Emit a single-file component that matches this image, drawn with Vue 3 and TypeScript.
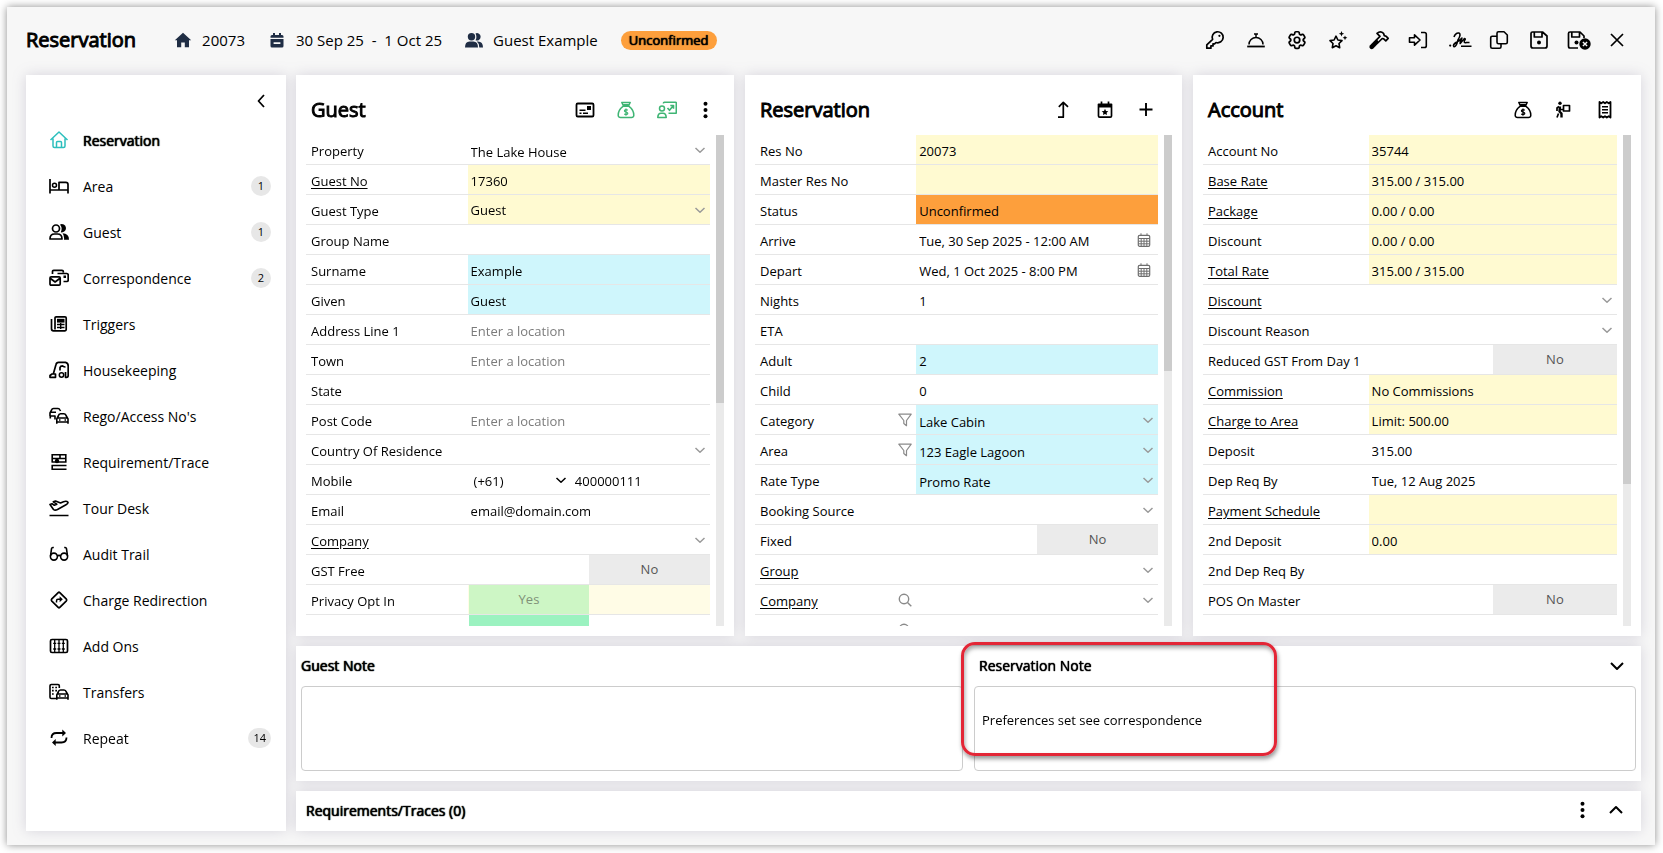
<script setup lang="ts">
import { h, ref } from 'vue'

type Kind = 'text' | 'select' | 'date' | 'toggle' | 'phone'
type Tone = 'yellow' | 'cyan' | 'orange' | 'cream'

interface Field {
  label: string
  value?: string
  kind?: Kind
  tone?: Tone
  link?: boolean
  locked?: boolean
  placeholder?: string
  icon?: string
  on?: boolean
}

interface Panel {
  id: string
  title: string
  tools: { icon: string; label: string; accent?: boolean }[]
  thumb: number
  fields: Field[]
}

const icons: Record<string, [number, number, string]> = {
  house: [18, 16, '<path fill="currentColor" stroke="none" d="M9 .8 17.200 8.200H15V15.200H10.800V10.600H7.200V15.200H3V8.200H.800Z"/>'],
  calendarMinus: [18, 16, '<path transform="translate(2 0)" fill="currentColor" stroke="none" fill-rule="evenodd" d="M3 1H5V3H9V1H11V3H12Q13.5 3 13.5 4.5V5.7H.5V4.5Q.5 3 2 3H3ZM.5 6.9H13.5V14Q13.5 15.5 12 15.5H2Q.5 15.5 .5 14ZM3.6 10.3V12H10.4V10.3Z"/>'],
  usersSolid: [18, 16, '<g fill="currentColor" stroke="none"><circle cx="6.5" cy="4.8" r="3.7"/><path d="M0 15.5Q0 9.5 4.5 9.5H8.5Q13 9.5 13 15.5Z"/><path d="M10.5 1.4A3.7 3.7 0 1 1 10.5 8.2Q12.300 5 10.500 1.400ZM11.800 9.500H13Q18 9.500 18 15.500H14.300Q14.300 11.300 11.800 9.500Z"/></g>'],
  key: [20, 20, '<path stroke-width="1.7" d="M7.600 9.400A5.500 5.500 0 1 1 11 12.500L9.600 13.800H8V15.900H5.900V18.200H1.800V14.800Z"/><circle cx="14.400" cy="5.800" r="1.100" fill="currentColor" stroke="none"/>'],
  bell: [20, 20, '<path d="M3 14.500A7 7 0 0 1 17 14.500M8 4H12M10 4V7"/><path stroke-width="1.800" d="M1.200 16.500H18.800"/>'],
  gear: [20, 20, '<g transform="translate(-1 -1) scale(.917)" stroke-width="1.900"><path d="M9.594 3.940c.090-.542.560-.940 1.110-.940h2.593c.550 0 1.020.398 1.110.940l.213 1.281c.063.374.313.686.645.870.074.040.147.083.220.127.325.196.720.257 1.075.124l1.217-.456a1.125 1.125 0 0 1 1.370.490l1.296 2.247a1.125 1.125 0 0 1-.260 1.431l-1.003.827c-.293.241-.438.613-.430.992a7.723 7.723 0 0 1 0 .255c-.008.378.137.750.430.991l1.004.827c.424.350.534.955.260 1.430l-1.298 2.247a1.125 1.125 0 0 1-1.369.491l-1.217-.456c-.355-.133-.750-.072-1.076.124a6.470 6.470 0 0 1-.220.128c-.331.183-.581.495-.644.869l-.213 1.281c-.090.543-.560.940-1.110.940h-2.594c-.550 0-1.019-.398-1.110-.940l-.213-1.281c-.062-.374-.312-.686-.644-.870a6.520 6.520 0 0 1-.220-.127c-.325-.196-.720-.257-1.076-.124l-1.217.456a1.125 1.125 0 0 1-1.369-.490l-1.297-2.247a1.125 1.125 0 0 1 .260-1.431l1.004-.827c.292-.240.437-.613.430-.991a6.932 6.932 0 0 1 0-.255c.007-.380-.138-.751-.430-.992l-1.004-.827a1.125 1.125 0 0 1-.260-1.430l1.297-2.247a1.125 1.125 0 0 1 1.370-.491l1.216.456c.356.133.751.072 1.076-.124.072-.044.146-.086.220-.128.332-.183.582-.495.644-.869l.214-1.280Z"/><circle cx="12" cy="12" r="3"/></g>'],
  stars: [20, 20, '<path stroke-width="1.600" d="M8 6.200 9.900 10 14 10.600 11 13.500 11.700 17.700 8 15.700 4.300 17.700 5 13.500 2 10.600 6.100 10Z"/><path fill="currentColor" stroke="none" d="M13.500 1 14.300 2.900 16.200 3.700 14.300 4.500 13.500 6.400 12.700 4.500 10.800 3.700 12.700 2.900ZM17 5.400 17.700 7.100 19.400 7.800 17.700 8.500 17 10.200 16.300 8.500 14.600 7.800 16.300 7.100Z"/>'],
  hammer: [20, 20, '<path stroke-width="4.600" stroke-linecap="round" d="M2.700 16.800 7.300 12.200"/><path stroke-width="1.700" d="M6.500 10.800 11 6.300 8 3.300Q11.500 .500 14.500 3.300L15.300 5.600 17 6.200 19.200 8.400 16.800 10.800 14.700 8.800 13.200 8.500 8.700 13"/>'],
  login: [20, 20, '<g transform="translate(-2 0)"><path stroke-width="1.600" d="M1.500 7.800H6.500V4.800L12 10 6.500 15.200V12.200H1.500ZM13 2.500H16.500Q18.300 2.500 18.300 4.300V15.700Q18.300 17.500 16.500 17.500H13"/></g>'],
  sign: [20, 20, '<g transform="translate(-2 0)"><path stroke-width="1.600" d="M5 7Q6.500 2.500 10 3Q12.500 4 9 10Q7 17.500 4.800 16.500Q3.500 15 7 12.500Q11 10.500 13 8Q10.500 13 11.200 13.500Q13 11 15.500 8.500Q17 9 15.500 10.500Q14.500 13.500 17.500 12.500L20.500 12.500M12 16.200H22.500"/><circle cx="1.200" cy="15.600" r="1.100" fill="currentColor" stroke="none"/></g>'],
  copy: [20, 20, '<path stroke-width="1.600" d="M9.500 1.800H15L18.300 5V12.200Q18.300 13.700 16.800 13.700H9.500Q8 13.700 8 12.200V3.300Q8 1.800 9.500 1.800ZM8 6.300H3.200Q1.700 6.300 1.700 7.800V16.700Q1.700 18.200 3.200 18.200H10.500Q12 18.200 12 16.700V13.700"/>'],
  save: [20, 20, '<path stroke-width="1.700" d="M3.500 2H13.500L18 6V16Q18 18 16 18H4Q2 18 2 16V3.500Q2 2 3.500 2ZM5.300 2V7H13V2"/><circle cx="10" cy="12.500" r="2" fill="currentColor" stroke="none"/>'],
  saveClose: [24, 20, '<path stroke-width="1.700" d="M11 18H3Q1.500 18 1.500 16V3.500Q1.500 2 3 2H13L17 6V8M4.800 2V7H12.500V2"/><circle cx="9.500" cy="12.500" r="2" fill="currentColor" stroke="none"/><circle cx="18" cy="14" r="5.700" fill="currentColor" stroke="none"/><path stroke="#f7f7f7" stroke-width="1.400" d="M15.900 11.900 20.100 16.100M20.100 11.900 15.900 16.100"/>'],
  close: [20, 20, '<path stroke-width="1.700" d="M4 4 16 16M16 4 4 16"/>'],
  chevLeft: [10, 16, '<path stroke-width="1.800" d="M8 2 2.500 8 8 14"/>'],
  chevDown: [16, 16, '<path stroke-width="2" d="M2 5 8 11 14 5"/>'],
  chevUp: [16, 16, '<path stroke-width="2" d="M2 11 8 5 14 11"/>'],
  chev: [12, 12, '<path stroke-width="1.500" d="M1.500 4 6 8.200 10.500 4"/>'],
  home: [20, 20, '<path d="M1.500 10 10 2 18.500 10M4 8.500V16Q4 17.500 5.500 17.500H14.500Q16 17.500 16 16V8.500M7.500 17.500V12.500Q7.500 11.500 8.500 11.500H11.500Q12.500 11.500 12.500 12.500V17.500"/>'],
  bed: [20, 20, '<path stroke-width="1.700" d="M1 3V17.500M1 14H19M19 17.500V8.500Q19 6.300 16.800 6.300H10V14"/><circle cx="5.500" cy="9.200" r="2"/>'],
  users: [20, 20, '<circle cx="7" cy="6.500" r="3.500" stroke-width="1.700"/><path stroke-width="1.700" d="M1 17Q1 12 5.500 12H8.500Q13 12 13 17Z"/><path fill="currentColor" stroke="none" d="M11 2.400A4.200 4.200 0 1 1 11.800 10.300Q13.800 6 11 2.400ZM13.500 11.300Q20 11.300 20 17.800H15Q15.500 13.500 13.500 11.300Z"/>'],
  mail: [20, 20, '<path stroke-width="1.700" d="M3.500 6V3.500Q3.500 2.300 4.700 2.300H13Q14.300 2.300 14.300 3.500V4.500M8.500 5.500H17.800Q19.200 5.500 19.200 6.800V12.200Q19.200 13.500 17.800 13.500H14.500M1 10Q1 8.800 2.200 8.800H10Q11.200 8.800 11.200 10V16Q11.200 17.200 10 17.200H2.200Q1 17.200 1 16ZM1.500 10.500 6.100 14 10.700 10.500"/><rect x="14.500" y="7.500" width="2.500" height="2.500" fill="currentColor" stroke="none"/>'],
  fax: [20, 20, '<path stroke-width="1.700" d="M6 4Q6 2.800 7.200 2.800H16Q17.200 2.800 17.200 4V15.500Q17.200 16.800 16 16.800H4.500Q2.500 16.800 2.500 14.800V5M6 4V15.500"/><path stroke-width="1.400" d="M8 10.500H15.500M8 13.500H15.500M11.700 9V15"/><rect x="8" y="4.800" width="7.500" height="3.800" fill="currentColor" stroke="none"/>'],
  vacuum: [20, 20, '<path stroke-width="1.700" d="M1 17.300V15.500L3 14H6.500V17.300ZM4.300 14 7 4.500Q7.500 2.300 9.500 2.300H16.500Q19.200 2.800 19.200 6V15.500Q19.200 17.300 17.500 17.300H16.500V12M11 10.500V7.500Q11.500 5.800 13.500 5.800Q15 7 16.500 7"/><circle cx="12.500" cy="15" r="2.200"/>'],
  cars: [20, 20, '<path stroke-width="1.600" d="M6 13.500V10H1V7L2.500 4.200Q3 2.500 4.500 2.500H9Q10.300 2.500 11 4L11.500 5M2 6.300H7M7.800 17.800V12.800L9.300 10Q9.800 7.800 11.500 7.800H15Q16.700 7.800 17.300 10L19 12.800V17.800M8 12H19M8 16H19M1.300 10V12.500"/><path stroke-width="1.500" d="M10 14H11.500M15.500 14H17"/>'],
  trace: [20, 20, '<path stroke-width="1.600" d="M2.500 2.800H17.500M2.500 6.500H17.500M2.500 10H17.500M2.500 13.500H17.500M2.500 17.200H17.500M3.200 2V7M16.800 2V10.500M3.200 6.500V10M3.200 13V18M11 2V6.500"/><circle cx="8" cy="9" r="2.200" fill="currentColor" stroke="none"/>'],
  plane: [20, 20, '<path stroke-width="1.600" d="M.500 17.500H19.500M1 6.500 3 5.800 5.300 7.200 7.800 6.200 4.300 3.800 6.500 3 11.500 5 14.500 3.700Q17.500 2.600 19 4.200Q19.200 5.500 17 6.700L8.500 11.500Q6 12.800 4.500 11.500Z"/>'],
  glasses: [20, 20, '<path stroke-width="1.600" d="M4.800 3.500H3.800Q2.800 3.500 2.500 4.800L1.500 12M15.200 3.500H16.200Q17.200 3.500 17.500 4.800L18.500 12M8 12Q10 10.800 12 12"/><circle cx="4.900" cy="12.600" r="3.500" stroke-width="1.600"/><circle cx="15.100" cy="12.600" r="3.500" stroke-width="1.600"/>'],
  redirect: [20, 20, '<path stroke-width="1.700" d="M9.200 2.600Q10 1.900 10.800 2.600L17.400 9.200Q18.100 10 17.400 10.800L10.800 17.400Q10 18.100 9.200 17.400L2.600 10.800Q1.900 10 2.600 9.200Z"/><path stroke-width="1.500" d="M7.500 12.500V11Q7.500 9.300 9 9.300H12"/><path fill="currentColor" stroke="none" d="M10.600 6.300 13.800 9.300 10.600 12.200Z"/>'],
  abacus: [20, 20, '<rect x="1.500" y="3.500" width="17" height="13" rx="1.500" stroke-width="1.700"/><path stroke-width="1.300" d="M5.700 4V16M10 4V16M14.300 4V16"/><path stroke-width="1.300" d="M4.200 7.300H7.200M8.500 7.300H11.500M12.800 7.300H15.800M4.200 13H7.200M8.500 13H11.500M12.800 13H15.800"/>'],
  transfer: [20, 20, '<path stroke-width="1.600" d="M7 16.500H2.300Q1 16.500 1 15.200V3.700Q1 2.500 2.300 2.500H9Q10.300 2.500 10.300 3.700V6M7.800 17.800V12.800L9.300 10Q9.800 8 11.500 8H15Q16.700 8 17.300 10L19 12.800V17.800M8 12H19M8 16H19"/><path stroke-width="1.700" d="M3 5.500H4.700M6.300 5.500H8M3 8.700H4.700M6.300 8.700H8M3 12H4.700M10 14H11.500M15.500 14H17"/>'],
  repeat: [20, 20, '<path stroke-width="1.800" d="M2.500 10Q2.500 5 7.500 5H15M17.500 9.500Q17.500 14.500 12.500 14.500H5"/><path fill="currentColor" stroke="none" d="M13.300 1.500 17 5 13.300 8.500ZM6.700 11 3 14.500 6.700 18Z"/>'],
  idCard: [20, 20, '<rect x="1.500" y="3.500" width="17" height="13" rx="1.300" stroke-width="1.800"/><path stroke-width="1.500" d="M4.500 10.300H10.500M4.500 13.300H6.500M8 13.300H13"/><rect x="12" y="6" width="4" height="4" fill="currentColor" stroke="none"/>'],
  moneyBag: [20, 20, '<path d="M7.500 6 5.800 2.500H14.200L12.500 6M7 6.300H13Q18 10 17.800 15.500Q17.500 17.600 15.500 17.600H4.500Q2.500 17.600 2.200 15.500Q2 10 7 6.300ZM7.500 4.800H12.500"/><path stroke-width="1.200" d="M11.800 10.300Q10 9.200 8.600 10.200Q8 11.600 10 12Q12.300 12.600 11.600 14Q10 15.200 8.200 14M10 8.600V15.700"/>'],
  coach: [20, 20, '<path stroke-width="1.600" d="M6.500 3.500V3Q6.500 2.300 7.300 2.300H18.500Q19.300 2.300 19.300 3V12.500Q19.300 13.300 18.500 13.300H11.500M.800 17.500Q1 13.300 4 13.300H6Q9 13.300 9.200 17.500ZM10.500 8 12.500 10.300 16 6M13.300 5.500H16.500V8.700"/><circle cx="5" cy="8.500" r="2.500"/>'],
  dots: [10, 20, '<g fill="currentColor" stroke="none"><circle cx="7.500" cy="3.700" r="2"/><circle cx="7.500" cy="10" r="2"/><circle cx="7.500" cy="16.300" r="2"/></g>'],
  turnUp: [20, 20, '<path stroke-width="1.700" d="M4 17.200H9.300V2.500M4.800 6.800 9.300 2.300 14 6.800"/>'],
  calendarStar: [20, 20, '<path stroke-width="1.700" d="M3.500 4.300H16.500V16Q16.500 17.200 15.300 17.200H4.700Q3.500 17.200 3.500 16ZM6.500 1.500V4M13.500 1.500V4"/><path fill="currentColor" stroke="none" d="M3 4H17V7.500H3ZM10 8.800 11 10.900 13.300 11.200 11.600 12.800 12 15.100 10 14 8 15.100 8.400 12.800 6.700 11.200 9 10.900Z"/>'],
  plus: [20, 20, '<path stroke-width="1.900" d="M10 3V16M3.500 9.500H16.500"/>'],
  dolly: [20, 20, '<g stroke-width="1.700"><path d="M9.500 7.500V11H15.500V5.500H9.500V8M9.500 9.500H6"/><path stroke-width="2.400" d="M6 6.500 5.500 11.500 7.500 13.500V17.500"/><path d="M4.500 13.500 3 17.500M5 6.500 3 8V11"/></g><circle cx="6" cy="3.200" r="1.700" fill="currentColor" stroke="none"/>'],
  receipt: [20, 20, '<path stroke-width="1.800" d="M4.500 2 6.300 3.300 8.200 2 10 3.300 11.800 2 13.700 3.300 15.500 2V17.500L13.700 16.200 11.800 17.500 10 16.200 8.200 17.500 6.300 16.200 4.500 17.500Z"/><path stroke-width="1.600" d="M7 6.700H13M7 9.700H13M7 12.700H13"/>'],
  calendar: [14, 14, '<rect x="1.300" y="2.300" width="11.400" height="11" rx="1.300" stroke-width="1.200"/><path stroke-width="1" d="M1.500 5.500H12.500M1.500 8.200H12.500M1.500 10.800H12.500M4.200 5.500V13M7 5.500V13M9.800 5.500V13M4 .300V3M10 .300V3"/>'],
  filter: [14, 14, '<path stroke-width="1.200" d="M.800 1.200H13.200L8.500 7.500V12.700L5.800 10.500V7.500Z"/>'],
  search: [14, 14, '<circle cx="6" cy="6" r="4.700" stroke-width="1.400"/><path stroke-width="1.400" d="M9.500 9.500 13.300 13.300"/>'],
}

const Icon = (props: { name: string }) => {
  const [w, ht, body] = icons[props.name]
  return h('svg', {
    width: w,
    height: ht,
    viewBox: `0 0 ${w} ${ht}`,
    fill: 'none',
    stroke: 'currentColor',
    'stroke-width': 1.5,
    'stroke-linejoin': 'round',
    'aria-hidden': 'true',
    innerHTML: body,
  })
}
Icon.props = ['name']

const toolGroups = [
  [
    { icon: 'key', label: 'Keys' },
    { icon: 'bell', label: 'Concierge' },
    { icon: 'gear', label: 'Settings' },
    { icon: 'stars', label: 'Experiences' },
    { icon: 'hammer', label: 'Maintenance' },
    { icon: 'login', label: 'Check in' },
    { icon: 'sign', label: 'Signature' },
  ],
  [
    { icon: 'copy', label: 'Copy' },
    { icon: 'save', label: 'Save' },
    { icon: 'saveClose', label: 'Save and close' },
  ],
  [{ icon: 'close', label: 'Close' }],
]

const menu: { icon: string; label: string; count?: number }[] = [
  { icon: 'home', label: 'Reservation' },
  { icon: 'bed', label: 'Area', count: 1 },
  { icon: 'users', label: 'Guest', count: 1 },
  { icon: 'mail', label: 'Correspondence', count: 2 },
  { icon: 'fax', label: 'Triggers' },
  { icon: 'vacuum', label: 'Housekeeping' },
  { icon: 'cars', label: "Rego/Access No's" },
  { icon: 'trace', label: 'Requirement/Trace' },
  { icon: 'plane', label: 'Tour Desk' },
  { icon: 'glasses', label: 'Audit Trail' },
  { icon: 'redirect', label: 'Charge Redirection' },
  { icon: 'abacus', label: 'Add Ons' },
  { icon: 'transfer', label: 'Transfers' },
  { icon: 'repeat', label: 'Repeat', count: 14 },
]
const active = ref('Reservation')

const panels = ref<Panel[]>([
  {
    id: 'guest',
    title: 'Guest',
    tools: [
      { icon: 'idCard', label: 'Guest card' },
      { icon: 'moneyBag', label: 'Guest account', accent: true },
      { icon: 'coach', label: 'Guest history', accent: true },
      { icon: 'dots', label: 'More' },
    ],
    thumb: 54.6,
    fields: [
      { label: 'Property', value: 'The Lake House', kind: 'select' },
      { label: 'Guest No', value: '17360', tone: 'yellow', link: true },
      { label: 'Guest Type', value: 'Guest', kind: 'select', tone: 'yellow', locked: true },
      { label: 'Group Name' },
      { label: 'Surname', value: 'Example', tone: 'cyan' },
      { label: 'Given', value: 'Guest', tone: 'cyan' },
      { label: 'Address Line 1', placeholder: 'Enter a location' },
      { label: 'Town', placeholder: 'Enter a location' },
      { label: 'State' },
      { label: 'Post Code', placeholder: 'Enter a location' },
      { label: 'Country Of Residence', kind: 'select' },
      { label: 'Mobile', value: '400000111', kind: 'phone' },
      { label: 'Email', value: 'email@domain.com' },
      { label: 'Company', kind: 'select', link: true },
      { label: 'GST Free', kind: 'toggle' },
      { label: 'Privacy Opt In', kind: 'toggle', on: true, tone: 'cream' },
      { label: '', kind: 'toggle', on: true },
    ],
  },
  {
    id: 'reservation',
    title: 'Reservation',
    tools: [
      { icon: 'turnUp', label: 'Move up' },
      { icon: 'calendarStar', label: 'Events' },
      { icon: 'plus', label: 'Add' },
    ],
    thumb: 48,
    fields: [
      { label: 'Res No', value: '20073', tone: 'yellow' },
      { label: 'Master Res No', tone: 'yellow' },
      { label: 'Status', value: 'Unconfirmed', tone: 'orange' },
      { label: 'Arrive', value: 'Tue, 30 Sep 2025 - 12:00 AM', kind: 'date' },
      { label: 'Depart', value: 'Wed, 1 Oct 2025 - 8:00 PM', kind: 'date' },
      { label: 'Nights', value: '1' },
      { label: 'ETA' },
      { label: 'Adult', value: '2', tone: 'cyan' },
      { label: 'Child', value: '0' },
      { label: 'Category', value: 'Lake Cabin', kind: 'select', tone: 'cyan', icon: 'filter' },
      { label: 'Area', value: '123 Eagle Lagoon', kind: 'select', tone: 'cyan', icon: 'filter' },
      { label: 'Rate Type', value: 'Promo Rate', kind: 'select', tone: 'cyan' },
      { label: 'Booking Source', kind: 'select' },
      { label: 'Fixed', kind: 'toggle' },
      { label: 'Group', kind: 'select', link: true },
      { label: 'Company', kind: 'select', link: true, icon: 'search' },
      { label: '', icon: 'search' },
    ],
  },
  {
    id: 'account',
    title: 'Account',
    tools: [
      { icon: 'moneyBag', label: 'Payments' },
      { icon: 'dolly', label: 'Transfer charges' },
      { icon: 'receipt', label: 'Receipt' },
    ],
    thumb: 71,
    fields: [
      { label: 'Account No', value: '35744', tone: 'yellow' },
      { label: 'Base Rate', value: '315.00 / 315.00', tone: 'yellow', link: true },
      { label: 'Package', value: '0.00 / 0.00', tone: 'yellow', link: true },
      { label: 'Discount', value: '0.00 / 0.00', tone: 'yellow' },
      { label: 'Total Rate', value: '315.00 / 315.00', tone: 'yellow', link: true },
      { label: 'Discount', kind: 'select', link: true },
      { label: 'Discount Reason', kind: 'select' },
      { label: 'Reduced GST From Day 1', kind: 'toggle' },
      { label: 'Commission', value: 'No Commissions', tone: 'yellow', link: true },
      { label: 'Charge to Area', value: 'Limit: 500.00', tone: 'yellow', link: true },
      { label: 'Deposit', value: '315.00' },
      { label: 'Dep Req By', value: 'Tue, 12 Aug 2025' },
      { label: 'Payment Schedule', tone: 'yellow', link: true },
      { label: '2nd Deposit', value: '0.00', tone: 'yellow' },
      { label: '2nd Dep Req By' },
      { label: 'POS On Master', kind: 'toggle' },
    ],
  },
])

const guestNote = ref('')
const reservationNote = ref('Preferences set see correspondence')
</script>

<template>
  <main class="window">
    <header class="topbar">
      <h1 class="title">Reservation</h1>
      <div class="fact"><Icon name="house" class="fact-icon" />20073</div>
      <div class="fact"><Icon name="calendarMinus" class="fact-icon" />30 Sep 25 &nbsp;-&nbsp; 1 Oct 25</div>
      <div class="fact"><Icon name="usersSolid" class="fact-icon" />Guest Example</div>
      <span class="status strong">Unconfirmed</span>
      <div class="tools">
        <div v-for="(group, g) in toolGroups" :key="g" class="tool-group">
          <button v-for="t in group" :key="t.icon" type="button" class="tool" :aria-label="t.label">
            <Icon :name="t.icon" />
          </button>
        </div>
      </div>
    </header>

    <div class="workspace">
      <nav class="sidebar card" aria-label="Reservation sections">
        <div class="collapse-row">
          <button type="button" class="collapse" aria-label="Collapse menu"><Icon name="chevLeft" /></button>
        </div>
        <a
          v-for="m in menu"
          :key="m.label"
          href="#"
          class="menu-item"
          :class="{ active: active === m.label }"
          @click.prevent="active = m.label"
        >
          <Icon :name="m.icon" class="menu-icon" />
          <span class="menu-label" :class="{ strong: active === m.label }">{{ m.label }}</span>
          <span v-if="m.count" class="count">{{ m.count }}</span>
        </a>
      </nav>

      <div class="content">
        <div class="panels">
          <section v-for="p in panels" :key="p.id" class="panel card">
            <header class="panel-head">
              <h2 class="title">{{ p.title }}</h2>
              <div class="panel-tools">
                <button
                  v-for="t in p.tools"
                  :key="t.icon"
                  type="button"
                  class="panel-tool"
                  :class="{ accent: t.accent }"
                  :aria-label="t.label"
                >
                  <Icon :name="t.icon" />
                </button>
              </div>
            </header>
            <div class="panel-body">
              <div class="rows">
                <div v-for="(f, i) in p.fields" :key="i" class="row">
                  <div class="name">
                    <a v-if="f.link" href="#" class="name-text linked" @click.prevent>{{ f.label }}</a>
                    <label v-else class="name-text" :for="`${p.id}-${i}`">{{ f.label }}</label>
                    <Icon v-if="f.icon" :name="f.icon" class="name-icon" />
                  </div>
                  <div class="cell" :class="f.tone">
                    <template v-if="f.kind === 'select'">
                      <select
                        :id="`${p.id}-${i}`"
                        class="control drop"
                        :class="{ locked: f.locked }"
                        :aria-label="f.label"
                      >
                        <option>{{ f.value }}</option>
                      </select>
                      <Icon name="chev" class="cell-icon" />
                    </template>
                    <label v-else-if="f.kind === 'toggle'" class="toggle" :class="{ on: f.on }">
                      <input
                        :id="`${p.id}-${i}`"
                        v-model="f.on"
                        type="checkbox"
                        class="toggle-box"
                        :aria-label="f.label || 'Marketing Opt In'"
                      />
                      <span class="toggle-face"><template v-if="f.label">{{ f.on ? 'Yes' : 'No' }}</template></span>
                    </label>
                    <template v-else-if="f.kind === 'phone'">
                      <div class="dial">
                        <select class="control dial-code" aria-label="Country code">
                          <option>(+61)</option>
                        </select>
                        <Icon name="chev" class="dial-icon" />
                      </div>
                      <input :id="`${p.id}-${i}`" v-model="f.value" type="tel" class="control" />
                    </template>
                    <template v-else>
                      <input
                        :id="`${p.id}-${i}`"
                        v-model="f.value"
                        type="text"
                        class="control"
                        :placeholder="f.placeholder"
                        :aria-label="f.label || 'Travel Agent'"
                      />
                      <Icon v-if="f.kind === 'date'" name="calendar" class="cell-icon date-icon" />
                    </template>
                  </div>
                </div>
              </div>
              <div class="track"><div class="thumb" :style="{ height: p.thumb + '%' }"></div></div>
            </div>
          </section>
        </div>

        <section class="notes card">
          <div class="note">
            <label for="guest-note" class="note-title strong">Guest Note</label>
            <textarea id="guest-note" v-model="guestNote" class="note-text"></textarea>
          </div>
          <div class="note">
            <div class="note-head">
              <label for="reservation-note" class="note-title strong inset">Reservation Note</label>
              <button type="button" class="fold" aria-label="Collapse notes"><Icon name="chevDown" /></button>
            </div>
            <textarea id="reservation-note" v-model="reservationNote" class="note-text"></textarea>
          </div>
          <div class="marker"></div>
        </section>

        <section class="traces card">
          <h3 class="traces-title strong">Requirements/Traces (0)</h3>
          <button type="button" class="fold" aria-label="More"><Icon name="dots" /></button>
          <button type="button" class="fold" aria-label="Expand traces"><Icon name="chevUp" /></button>
        </section>
      </div>
    </div>
  </main>
</template>

<style>
body {
  margin: 0;
  background: #fff;
}
</style>

<style scoped>
* {
  box-sizing: border-box;
}
.window {
  margin: 7px 8px 8px 7px;
  padding: 0 14px 14px 19px;
  background: #f7f7f7;
  box-shadow: 0 0 8px rgba(0, 0, 0, 0.45);
  font-family: 'Open Sans', 'Noto Sans', sans-serif;
  font-size: 13px;
  color: #000;
}
button {
  display: flex;
  align-items: center;
  justify-content: center;
  padding: 0;
  border: 0;
  background: none;
  color: #000;
  cursor: pointer;
}
svg {
  display: block;
  flex: none;
}
.title {
  margin: 0;
  font-size: 20px;
  font-weight: 400;
  line-height: 28px;
  -webkit-text-stroke: 1px currentColor;
}
.strong {
  font-weight: 400;
  text-shadow: 0 0 1px currentColor, 0 0 1px currentColor;
}
.topbar {
  display: flex;
  align-items: center;
  height: 68px;
  padding: 0 14px 2px 0;
  font-size: 15px;
}
.topbar .title {
  margin-right: 38px;
}
.fact {
  display: flex;
  align-items: center;
  gap: 10px;
  margin-right: 23px;
  white-space: nowrap;
}
.fact-icon {
  color: #1f2d44;
}
.status {
  padding: 0 8px;
  border-radius: 10px;
  background: #fd9f3c;
  font-size: 13px;
  line-height: 19px;
}
.tools {
  display: flex;
  gap: 18px;
  margin-left: auto;
}
.tool-group {
  display: flex;
  gap: 20px;
}
.tool-group:first-child {
  gap: 21px;
}
.tool {
  width: 20px;
  height: 20px;
}
.tool svg {
  overflow: visible;
}
.workspace {
  display: flex;
  gap: 10px;
  filter: drop-shadow(0 0 7px rgba(85, 75, 115, 0.2));
}
.card {
  background: #fff;
}
.sidebar {
  flex: none;
  width: 260px;
}
.collapse-row {
  display: flex;
  justify-content: flex-end;
  height: 42px;
  padding: 18px 20px 0 0;
}
.collapse {
  width: 10px;
  height: 16px;
}
.menu-item {
  display: flex;
  align-items: center;
  height: 46px;
  padding: 0 15px 0 23px;
  color: #000;
  font-size: 14px;
  text-decoration: none;
}
.menu-label {
  flex: 1;
  margin-left: 14px;
}
.active .menu-icon {
  color: #2cbfbd;
}
.count {
  min-width: 20px;
  padding: 0 5px;
  border-radius: 10px;
  background: #e7e7e7;
  font-size: 11px;
  line-height: 20px;
  text-align: center;
}
.content {
  display: flex;
  flex: 1;
  flex-direction: column;
  gap: 10px;
  min-width: 0;
}
.panels {
  display: grid;
  grid-template-columns: 438fr 437fr 448fr;
  gap: 11px;
}
.panel {
  min-width: 0;
  padding: 10px 10px 10px;
}
.panel-head {
  display: flex;
  align-items: center;
  justify-content: space-between;
  height: 50px;
  padding: 0 16px 0 5px;
}
.panel-tools {
  display: flex;
  gap: 21px;
}
.accent {
  color: #3fb574;
}
.panel-body {
  display: flex;
  gap: 6px;
  height: 491px;
}
.rows {
  flex: 1;
  min-width: 0;
  overflow: hidden;
}
.track {
  width: 8px;
  background: #eaeaea;
}
.thumb {
  background: #ccc;
}
.row {
  display: grid;
  grid-template-columns: 2fr 3fr;
  height: 30px;
  border-bottom: 1px solid #e6e6e6;
}
.name {
  display: flex;
  align-items: center;
  justify-content: space-between;
  min-width: 0;
  padding: 0 4px 0 5px;
}
.name-text {
  padding-top: 2px;
  color: #000;
  line-height: 18px;
  white-space: nowrap;
}
.linked {
  text-decoration: underline;
  text-underline-offset: 2px;
}
.name-icon {
  color: #8a8a8a;
}
.cell {
  display: flex;
  align-items: center;
  min-width: 0;
}
.yellow {
  background: #fffad1;
}
.cyan {
  background: #cff6fc;
}
.orange {
  background: #fd9f3c;
}
.cream {
  background: #fffce6;
}
.control {
  flex: 1;
  min-width: 0;
  width: 100%;
  height: 29px;
  margin: 0;
  padding: 2px 3px 0;
  border: 0;
  border-radius: 0;
  outline: 0;
  background: transparent;
  color: #000;
  font: inherit;
  appearance: none;
}
.control::placeholder {
  color: #7b7b7b;
}
.drop {
  padding-top: 5px;
}
.locked {
  padding-top: 0;
}
.cell-icon {
  margin: 0 4px 0 0;
  color: #9a9a9a;
}
.date-icon {
  margin-right: 7px;
  color: #6e6e6e;
}
.dial {
  display: flex;
  flex: none;
  align-items: center;
  width: 43%;
  padding: 0 5px 0 3px;
}
.toggle {
  position: relative;
  display: flex;
  width: 100%;
  height: 100%;
  justify-content: flex-end;
}
.toggle.on {
  justify-content: flex-start;
  padding-left: 1px;
}
.toggle-box {
  position: absolute;
  inset: 0;
  margin: 0;
  opacity: 0;
  cursor: pointer;
}
.toggle-face {
  width: 50%;
  background: #ebebeb;
  color: #555;
  line-height: 29px;
  text-align: center;
}
.on .toggle-face {
  background: #9bf2c0;
  color: #4c6b4c;
}
.cream .on .toggle-face {
  background: #cdf6c5;
  color: #7f9178;
}
.notes {
  position: relative;
  display: grid;
  grid-template-columns: 1fr 1fr;
  gap: 11px;
  padding: 0 5px 10px;
}
.note {
  display: flex;
  flex-direction: column;
}
.note-head {
  display: flex;
  align-items: center;
  justify-content: space-between;
  padding-right: 11px;
}
.note-title {
  font-size: 14px;
  line-height: 40px;
}
.inset {
  padding-left: 5px;
}
.note-text {
  display: block;
  width: 100%;
  height: 85px;
  margin: 0;
  padding: 24px 7px 0;
  border: 1px solid #ccc;
  border-radius: 4px;
  outline: 0;
  background: #fff;
  color: #000;
  font: inherit;
  line-height: 18px;
  resize: none;
}
.marker {
  position: absolute;
  top: -4px;
  left: calc(50% - 8px);
  width: 316px;
  height: 114px;
  border: 3px solid #e32636;
  border-radius: 14px;
  box-shadow: 1px 3px 4px rgba(0, 0, 0, 0.4), inset 1px 3px 4px rgba(0, 0, 0, 0.35);
  pointer-events: none;
}
.traces {
  display: flex;
  align-items: center;
  gap: 23px;
  height: 40px;
  padding: 0 17px 2px 10px;
}
.traces-title {
  flex: 1;
  margin: 0;
  font-size: 14px;
}
</style>
